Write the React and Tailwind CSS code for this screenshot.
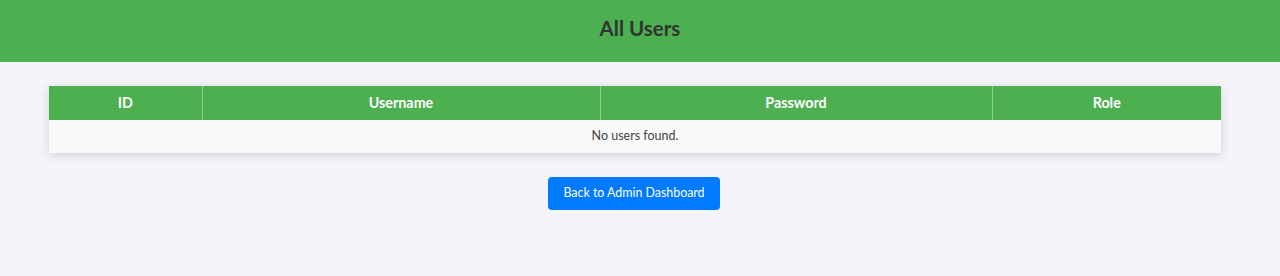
export default function App() {
  return (
    <div className="min-h-[276px] bg-[#f4f4f9] font-['Lato','Liberation_Sans',sans-serif]">
      <header className="h-[62px] bg-[#4caf50] flex items-center justify-center pb-[5px]">
        <h1 className="text-[20.5px] font-bold text-[#333]">All Users</h1>
      </header>
      <div className="w-[1270px] px-[49px] pt-[24px]">
        <table className="w-full border-collapse bg-white shadow-[0_2px_10px_rgba(0,0,0,0.15)] text-[12.5px]">
          <thead>
            <tr className="bg-[#4caf50] text-white h-[34px]">
              <th className="w-[153px] font-bold text-[14.3px] border-r border-[#8fd092]">ID</th>
              <th className="w-[398px] font-bold text-[14.3px] border-r border-[#8fd092]">Username</th>
              <th className="w-[392px] font-bold text-[14.3px] border-r border-[#8fd092]">Password</th>
              <th className="font-bold text-[14.3px]">Role</th>
            </tr>
          </thead>
          <tbody>
            <tr className="bg-[#f9f9f9] h-[33px]">
              <td colSpan={4} className="text-center text-[#444]">No users found.</td>
            </tr>
          </tbody>
        </table>
        <div className="flex justify-center pt-[24px] pr-[2px]">
          <button className="w-[172px] h-[33px] rounded-[4px] bg-[#007bff] text-white text-[12.4px]">
            Back to Admin Dashboard
          </button>
        </div>
      </div>
    </div>
  );
}
